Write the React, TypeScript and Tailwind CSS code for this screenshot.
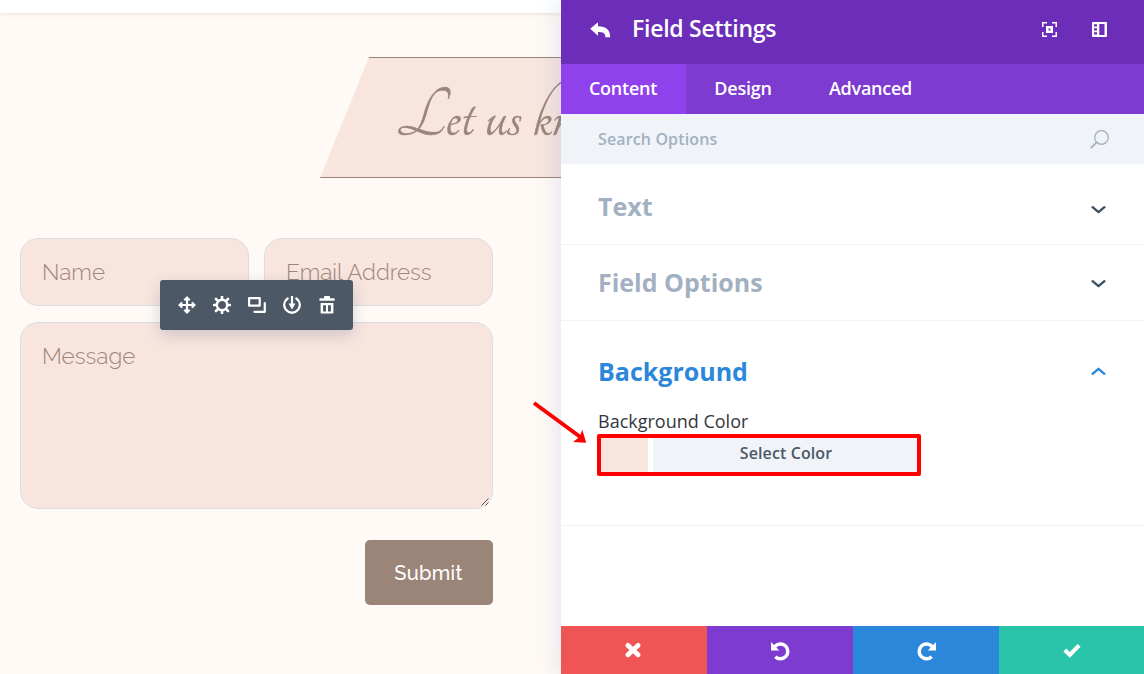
import React from 'react';
import clsx from 'clsx';

type IconProps = {
  className?: string;
};

type ToggleProps = {
  title: string;
  className?: string;
  chevron?: string;
  open?: boolean;
  children?: React.ReactNode;
};

const BackIcon = () => (
  <svg className="mb-[5px]" width="21" height="16" viewBox="0 0 21 16" fill="#fff">
    <path d="M.2 6.8 8 .3v3.9c8 0 12.2 3.6 12.2 11h-4.8c0-4.1-2.3-5.3-7.4-5.3v3.9z" />
  </svg>
);

const FocusIcon = () => (
  <svg width="15" height="15" viewBox="0 0 15 15" fill="none" stroke="#fff">
    <path d="M.75 5V.75H5M10 .75h4.25V5M14.25 10v4.25H10M5 14.25H.75V10" strokeWidth="1.5" />
    <rect x="5.25" y="5.25" width="4.5" height="4.5" strokeWidth="2.5" />
  </svg>
);

const DockIcon = () => (
  <svg width="15" height="15" viewBox="0 0 15 15">
    <rect width="15" height="15" rx="1" fill="#fff" />
    <path d="M2 2.2h3v2.4H2zM2 6.2h3v2.4H2zM2 10.2h3v2.4H2zM7.3 2h5.2v11H7.3z" fill="#6c2eb9" />
  </svg>
);

const SearchIcon = () => (
  <svg width="19" height="19" viewBox="0 0 19 19" fill="none" stroke="#a2b0c1">
    <circle cx="11.5" cy="7.5" r="6.8" strokeWidth="1.3" />
    <path d="m.8 18.2 6-6" strokeWidth="1.8" />
  </svg>
);

const Chevron = ({ className }: IconProps) => (
  <svg className={className} width="16" height="10" viewBox="0 0 16 10" fill="none" stroke="currentColor">
    <path d="m2.6 2.2 5.9 5 5.9-5" strokeWidth="2.4" strokeLinecap="round" strokeLinejoin="round" />
  </svg>
);

const MoveIcon = () => (
  <svg width="18" height="18" viewBox="0 0 18 18" fill="none" stroke="#fff" strokeLinejoin="round">
    <path d="M9 3v12M3 9h12" strokeWidth="2.2" />
    <path
      d="M9 1 11.6 3.7H6.4zM9 17l-2.6-2.7h5.2zM1 9l2.7-2.6v5.2zM17 9l-2.7 2.6V6.4z"
      fill="#fff"
      strokeWidth="1.4"
    />
  </svg>
);

const GearIcon = () => (
  <svg width="18" height="18" viewBox="0 0 18 18" fill="none" stroke="#fff">
    <circle cx="9" cy="9" r="5.2" strokeWidth="2.4" />
    <path
      d="M9 .8v2.7M9 14.5v2.7M.8 9h2.7M14.5 9h2.7M3 3l1.9 1.9M13.1 13.1 15 15M3 15l1.9-1.9M13.1 4.9 15 3"
      strokeWidth="2.6"
      strokeLinecap="round"
    />
  </svg>
);

const DuplicateIcon = () => (
  <svg width="18" height="16" viewBox="0 0 18 16" fill="none" stroke="#fff" strokeWidth="2.2" strokeLinejoin="round">
    <path d="M1.1 1.1h10.6v7.6H1.1z" />
    <path d="M16.8 6v8.8H6.4" strokeLinecap="round" />
  </svg>
);

const SaveIcon = () => (
  <svg width="18" height="18" viewBox="0 0 18 18" fill="none" stroke="#fff">
    <path d="M4.6 2.5A7.8 7.8 0 1 0 13.4 2.5" strokeWidth="2.3" strokeLinecap="round" />
    <path d="M9 0v9" strokeWidth="2.2" />
    <path d="M5.6 7.6h6.8L9 13.4z" fill="#fff" stroke="none" />
  </svg>
);

const TrashIcon = () => (
  <svg width="16" height="18" viewBox="0 0 16 18" fill="#fff">
    <path d="M5 2.2V.8Q5 0 6 0h4q1 0 1 .8v1.4h4q.6 0 .6.8v1.8H.4V3q0-.8.6-.8z" />
    <path
      d="M1.6 7h12.8v9.4q0 1.2-1.2 1.2H2.8q-1.2 0-1.2-1.2zm2.5 2.2v6.2H7V9.2zm4.9 0v6.2h2.9V9.2z"
      fillRule="evenodd"
    />
  </svg>
);

const CloseIcon = () => (
  <svg className="mr-[2px]" width="16" height="16" viewBox="0 0 16 16" stroke="#fff">
    <path d="m3 3.4 10 9.4M13 3.4 3 12.8" strokeWidth="4.8" strokeLinecap="round" />
  </svg>
);

const UndoIcon = ({ className }: IconProps) => (
  <svg className={clsx('mt-[2px]', className)} width="19" height="19" viewBox="0 0 19 19" fill="none">
    <path d="M3.8 4.5A7.4 7.4 0 1 1 4.3 14.7" stroke="#fff" strokeWidth="3.5" />
    <path d="M0 0 8.2 8.4H0z" fill="#fff" />
  </svg>
);

const CheckIcon = () => (
  <svg className="mt-px ml-px" width="18" height="15" viewBox="0 0 18 15" fill="none" stroke="#fff">
    <path d="m1.8 7 5 4.9 9.3-9.5" strokeWidth="4.2" />
  </svg>
);

function Toggle({ title, className, chevron, open, children }: ToggleProps) {
  return (
    <section className={clsx('border-b border-[#f0f2f7] pl-[37px]', className)}>
      <div className="flex items-center justify-between pr-[38px]">
        <h2 className={clsx('text-[25px] leading-8 font-bold', open ? 'text-[#2b87da]' : 'text-[#a2b0c1]')}>
          {title}
        </h2>
        <Chevron className={clsx(chevron, open ? '-scale-y-100 text-[#2b87da]' : 'text-[#3e5062]')} />
      </div>
      {children}
    </section>
  );
}

function Toolbar() {
  return (
    <div className="absolute left-[160px] top-[280px] flex h-[50px] w-[193px] items-center rounded-[3px] bg-[#4c5866] px-[9px] shadow-[0_5px_16px_rgba(43,60,120,0.2)]">
      {[MoveIcon, GearIcon, DuplicateIcon, SaveIcon, TrashIcon].map((Icon, i) => (
        <button key={i} className="flex w-[35px] justify-center">
          <Icon />
        </button>
      ))}
    </div>
  );
}

function ContactPage() {
  const field = 'rounded-[18px] border border-[#d9dee5] bg-[#f8e5de] px-[21px] text-[#a08478]';

  return (
    <main className="relative h-full w-[561px] flex-none overflow-hidden bg-[#fffaf5] font-['Raleway','Lato',sans-serif]">
      <div className="h-[13px] bg-white shadow-[0_1px_4px_rgba(0,0,0,0.1)]" />
      <div className="mt-11 ml-[320px] h-[121px] w-[400px] border-y border-[#9b8579] bg-[#f8e5de] pl-[76px] [clip-path:polygon(49px_0,100%_0,100%_100%,0_100%)]">
        <h1 className="pt-[14px] font-['Tangerine','Liberation_Serif',serif] text-[75px] leading-[90px] whitespace-nowrap text-[#9b8579] [-webkit-text-stroke:0.4px_#9b8579]">
          Let us kn
        </h1>
      </div>
      <form className="mt-[60px] ml-5 w-[473px] text-[22.5px] leading-[66px] font-light">
        <div className="flex gap-[15px]">
          <div className={clsx(field, 'h-[68px] flex-1')}>Name</div>
          <div className={clsx(field, 'h-[68px] flex-1')}>Email Address</div>
        </div>
        <div className={clsx(field, 'relative mt-4 h-[187px]')}>
          Message
          <svg className="absolute right-[3px] bottom-[2px]" width="8" height="8" viewBox="0 0 8 8" stroke="#555">
            <path d="M.5 7.5l7-7M4.5 7.5l3-3" />
          </svg>
        </div>
        <div className="flex justify-end pt-[31px]">
          <div className="h-[65px] w-32 rounded-[5px] bg-[#9b8579] pr-px text-center text-[20px] leading-[66px] font-medium tracking-[0.3px] text-white">
            Submit
          </div>
        </div>
      </form>
      <Toolbar />
    </main>
  );
}

export default function App() {
  return (
    <div className="relative flex h-[674px] w-[1144px] overflow-hidden bg-white">
      <ContactPage />
      <aside className="relative flex w-[583px] flex-col bg-white font-['Open_Sans',sans-serif] shadow-[0_0_26px_rgba(43,87,175,0.17)]">
        <header className="flex h-16 items-center bg-[#6c2eb9] pr-[37px] pl-[29px] text-white">
          <BackIcon />
          <h1 className="ml-[21px] flex-1 pb-[7px] text-[23px] font-semibold tracking-[-0.25px]">Field Settings</h1>
          <div className="flex gap-[35px] pb-[5px]">
            <FocusIcon />
            <DockIcon />
          </div>
        </header>
        <nav className="flex h-[50px] bg-[#7e3bd0] text-lg leading-[49px] font-semibold tracking-[-0.25px] text-white">
          <a className="w-[125px] bg-[#8f42ec] pr-px text-center">Content</a>
          <a className="w-[115px] pr-px text-center">Design</a>
          <a className="w-[139px] text-center">Advanced</a>
        </nav>
        <div className="flex h-[50px] items-center justify-between bg-[#f0f4f8] pr-[35px] pl-[37px]">
          <span className="text-base font-semibold tracking-[0.13px] text-[#a2b0c1]">Search Options</span>
          <SearchIcon />
        </div>
        <Toggle title="Text" className="h-[81px] pt-[26px]" chevron="mt-[7px]" />
        <Toggle title="Field Options" className="h-[76px] pt-[21px]" chevron="mt-[4px]" />
        <Toggle title="Background" className="h-[205px] pt-[34px]" open>
          <p className="mt-[20px] text-lg leading-7 font-medium text-[#32373c]">Background Color</p>
          <div className="-mt-px -ml-px flex h-[42px] w-[324px] gap-[5px] rounded-[2px] border-4 border-[#ff0000]">
            <div className="w-[47px] bg-[#f8e5de]" />
            <div className="flex-1 bg-[#f0f4f8] pl-[2px] text-center text-base leading-[31px] font-semibold tracking-[0.1px] text-[#4c5866]">
              Select Color
            </div>
          </div>
        </Toggle>
        <footer className="mt-auto grid h-12 grid-cols-[146px_146px_146px_145px]">
          <button className="flex items-center justify-center bg-[#ef5555]">
            <CloseIcon />
          </button>
          <button className="flex items-center justify-center bg-[#7e3bd0]">
            <UndoIcon />
          </button>
          <button className="flex items-center justify-center bg-[#2b87da]">
            <UndoIcon className="ml-px -scale-x-100" />
          </button>
          <button className="flex items-center justify-center bg-[#29c4a9]">
            <CheckIcon />
          </button>
        </footer>
      </aside>
      {/* callout arrow pointing at the colour picker */}
      <svg className="absolute left-[530px] top-[398px]" width="60" height="48" viewBox="0 0 60 48">
        <path d="m4 5 47 34.5" stroke="#ff0000" strokeWidth="4" />
        <path d="m56.2 44.7-3.9-13-2.8 7.3L43 44z" fill="#ff0000" />
      </svg>
    </div>
  );
}
